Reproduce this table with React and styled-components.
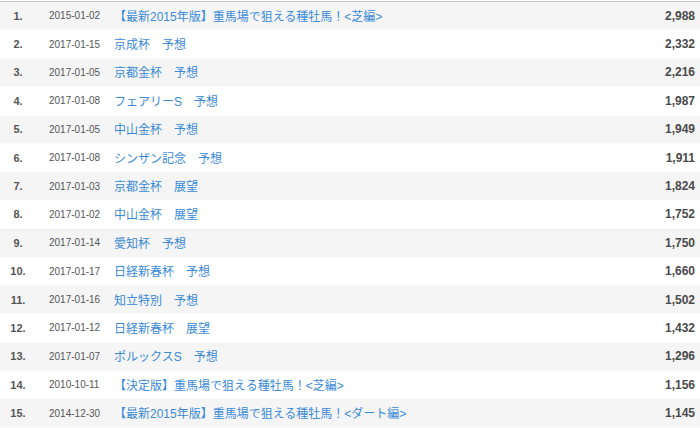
import React from 'react';
import styled, { createGlobalStyle } from 'styled-components';

const GlobalStyle = createGlobalStyle`
    html, body {
        margin: 0;
        padding: 0;
        background: #fff;
    }
    body {
        font-family: "Liberation Sans", Arial, "Noto Sans CJK JP", sans-serif;
    }
`;

const RankTable = styled.div`
    width: 700px;
    margin-top: 1px;
    border-top: 1px solid #c9c9c9;
`;

const Row = styled.div`
    display: grid;
    grid-template-columns: 36px 78px 1fr 100px;
    align-items: center;
    height: 28.4px;
    background: ${props => (props.$striped ? '#f5f5f5' : '#fff')};
    border-bottom: 1px solid #fbfbfb;
    box-sizing: border-box;
`;

const Rank = styled.span`
    text-align: center;
    font-size: 11px;
    font-weight: bold;
    color: #555;
`;

const DateCell = styled.span`
    padding-left: 13px;
    font-size: 10px;
    color: #555;
`;

const TitleLink = styled.a`
    font-size: 12px;
    color: #3a8ad8;
    text-decoration: none;
    white-space: nowrap;
    font-family: "Liberation Sans", Arial, "Noto Sans CJK JP", sans-serif;
`;

const Count = styled.span`
    text-align: right;
    padding-right: 5px;
    font-size: 12px;
    font-weight: bold;
    color: #4a4a4a;
`;

const rows = [
    ['2015-01-02', '【最新2015年版】重馬場で狙える種牡馬！<芝編>', '2,988'],
    ['2017-01-15', '京成杯　予想', '2,332'],
    ['2017-01-05', '京都金杯　予想', '2,216'],
    ['2017-01-08', 'フェアリーS　予想', '1,987'],
    ['2017-01-05', '中山金杯　予想', '1,949'],
    ['2017-01-08', 'シンザン記念　予想', '1,911'],
    ['2017-01-03', '京都金杯　展望', '1,824'],
    ['2017-01-02', '中山金杯　展望', '1,752'],
    ['2017-01-14', '愛知杯　予想', '1,750'],
    ['2017-01-17', '日経新春杯　予想', '1,660'],
    ['2017-01-16', '知立特別　予想', '1,502'],
    ['2017-01-12', '日経新春杯　展望', '1,432'],
    ['2017-01-07', 'ポルックスS　予想', '1,296'],
    ['2010-10-11', '【決定版】重馬場で狙える種牡馬！<芝編>', '1,156'],
    ['2014-12-30', '【最新2015年版】重馬場で狙える種牡馬！<ダート編>', '1,145'],
];

function App() {
    return (
        <>
            <GlobalStyle />
            <RankTable>
                {rows.map(([date, title, count], i) => (
                    <Row key={i} $striped={i % 2 === 0}>
                        <Rank>{i + 1}.</Rank>
                        <DateCell>{date}</DateCell>
                        <span><TitleLink href="#">{title}</TitleLink></span>
                        <Count>{count}</Count>
                    </Row>
                ))}
            </RankTable>
        </>
    );
}

export default App;
